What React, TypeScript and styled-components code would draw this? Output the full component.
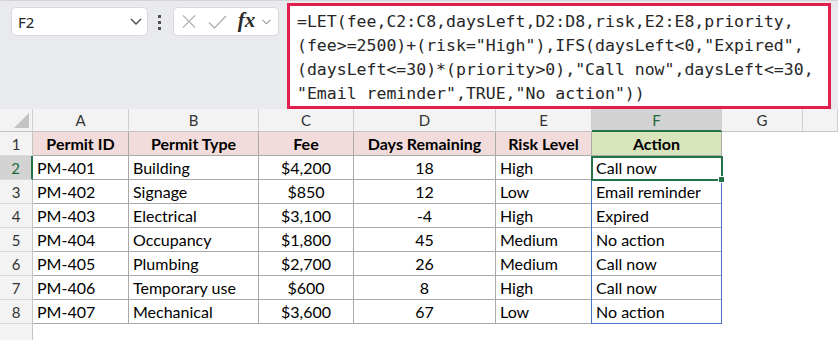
import React from "react";
import styled, { createGlobalStyle } from "styled-components";

const GlobalStyle = createGlobalStyle`
  html, body {
    margin: 0;
    padding: 0;
    background: #e9eaee;
  }
  body {
    font-family: "Lato", "Liberation Sans", sans-serif;
  }
`;

const Page = styled.div`
  width: 838px;
  height: 340px;
  overflow: hidden;
  background: #e9eaee;
  display: flex;
  flex-direction: column;
`;

const TopStrip = styled.div`
  height: 3px;
  background: #f3f3f5;
  border-bottom: 1px solid #d4d4d8;
`;

const Toolbar = styled.div`
  display: flex;
  align-items: flex-start;
  height: 116px;
  box-sizing: border-box;
  padding: 2px 0 0 11px;
`;

const NameBox = styled.div`
  margin-top: 4px;
  width: 137px;
  height: 29px;
  box-sizing: border-box;
  background: #fff;
  border: 1px solid #d9d9dd;
  border-radius: 5px;
  display: flex;
  align-items: center;
  justify-content: space-between;
  padding: 0 5px 0 6px;
  font-family: "Noto Sans", "Open Sans", sans-serif;
  font-size: 15px;
  color: #222;
`;

const Dots = styled.div`
  margin: 12px 0 0 10px;
  display: flex;
  flex-direction: column;
  gap: 3px;
  span {
    width: 3px;
    height: 3px;
    background: #505050;
  }
`;

const FxBox = styled.div`
  margin: 4px 0 0 12px;
  width: 106px;
  height: 29px;
  box-sizing: border-box;
  background: #fff;
  border: 1px solid #d9d9dd;
  border-radius: 5px;
  display: flex;
  align-items: center;
  padding: 0 0 0 8px;
`;

const IconSlot = styled.div<{ w: number }>`
  width: ${(p) => p.w}px;
  display: flex;
  align-items: center;
  justify-content: center;
`;

const FxLabel = styled.span`
  font-family: "Liberation Serif", "DejaVu Serif", serif;
  font-style: italic;
  font-weight: bold;
  font-size: 21px;
  line-height: 1;
  color: #2a2a2a;
  margin-top: -3px;
`;

const FormulaBar = styled.div`
  margin-left: 8px;
  width: 544px;
  height: 106px;
  box-sizing: border-box;
  border: 3px solid #e11f4c;
  background: #fff;
  padding: 4px 0 0 7px;
  font-family: "DejaVu Sans Mono", "Liberation Mono", monospace;
  font-size: 16.5px;
  color: #262626;
`;

const FormulaLine = styled.div`
  height: 24px;
  line-height: 24px;
  white-space: pre;
`;

const Sheet = styled.div`
  flex: 1;
  background: #fff;
  display: grid;
  grid-template-columns: 33px 96px 130px 95px 142px 96px 130px 81px 1fr;
  grid-template-rows: 23px repeat(9, 24px);
`;

type Pos = { $r: number; $c: number };

const ColHead = styled.div<Pos & { $active?: boolean }>`
  grid-row: ${(p) => p.$r};
  grid-column: ${(p) => p.$c};
  background: ${(p) => (p.$active ? "#d3d3d3" : "#f3f3f3")};
  border-right: 1px solid #cfcfcf;
  border-bottom: ${(p) => (p.$active ? "2px solid #217346" : "1px solid #c4c4c4")};
  box-sizing: border-box;
  display: flex;
  align-items: center;
  justify-content: center;
  font-size: 15px;
  color: ${(p) => (p.$active ? "#1d6b3d" : "#333")};
`;

const Corner = styled(ColHead)`
  align-items: flex-end;
  justify-content: flex-end;
  padding: 0 3px 3px 0;
`;

const RowHead = styled.div<Pos & { $active?: boolean }>`
  grid-row: ${(p) => p.$r};
  grid-column: ${(p) => p.$c};
  background: ${(p) => (p.$active ? "#d3d3d3" : "#f3f3f3")};
  border-right: ${(p) => (p.$active ? "2px solid #217346" : "1px solid #c4c4c4")};
  border-bottom: 1px solid #dcdcdc;
  box-sizing: border-box;
  display: flex;
  align-items: center;
  justify-content: center;
  font-size: 15px;
  color: ${(p) => (p.$active ? "#1d6b3d" : "#333")};
`;

type Align = "left" | "center";

const Cell = styled.div<Pos & { $align?: Align; $fill?: string; $bold?: boolean }>`
  grid-row: ${(p) => p.$r};
  grid-column: ${(p) => p.$c};
  background: ${(p) => p.$fill || "#fff"};
  border-right: 1px solid #a9a9a9;
  border-bottom: 1px solid #a9a9a9;
  box-sizing: border-box;
  display: flex;
  align-items: center;
  justify-content: ${(p) => (p.$align === "center" ? "center" : "flex-start")};
  padding: 0 4px;
  font-size: 16px;
  font-weight: ${(p) => (p.$bold ? 700 : 400)};
  color: #000;
  white-space: nowrap;
  overflow: hidden;
`;

const SpillRange = styled.div`
  grid-column: 7;
  grid-row: 3 / 10;
  margin-left: -1px;
  border: 1px solid #4a74c9;
  pointer-events: none;
`;

const Selection = styled.div`
  grid-column: 7;
  grid-row: 3;
  margin: 0 -1px -1px -1px;
  border: 2px solid #217346;
  position: relative;
  pointer-events: none;
`;

const FillHandle = styled.span`
  position: absolute;
  right: -4px;
  bottom: -4px;
  width: 5px;
  height: 5px;
  background: #217346;
  border: 1px solid #fff;
`;

const cols = ["A", "B", "C", "D", "E", "F", "G", ""];

const headers = ["Permit ID", "Permit Type", "Fee", "Days Remaining", "Risk Level", "Action"];

const rows = [
  ["PM-401", "Building", "$4,200", "18", "High", "Call now"],
  ["PM-402", "Signage", "$850", "12", "Low", "Email reminder"],
  ["PM-403", "Electrical", "$3,100", "-4", "High", "Expired"],
  ["PM-404", "Occupancy", "$1,800", "45", "Medium", "No action"],
  ["PM-405", "Plumbing", "$2,700", "26", "Medium", "Call now"],
  ["PM-406", "Temporary use", "$600", "8", "High", "Call now"],
  ["PM-407", "Mechanical", "$3,600", "67", "Low", "No action"],
];

const aligns: Align[] = ["left", "left", "center", "center", "left", "left"];

const formula = [
  "=LET(fee,C2:C8,daysLeft,D2:D8,risk,E2:E8,priority,",
  "(fee>=2500)+(risk=\"High\"),IFS(daysLeft<0,\"Expired\",",
  "(daysLeft<=30)*(priority>0),\"Call now\",daysLeft<=30,",
  "\"Email reminder\",TRUE,\"No action\"))",
];

const Chevron = () => (
  <svg width="12" height="7" viewBox="0 0 12 7" fill="none">
    <path d="M1 1l5 5 5-5" stroke="#444" strokeWidth="1.3" />
  </svg>
);

export default function App() {
  return (
    <Page>
      <GlobalStyle />
      <TopStrip />
      <Toolbar>
        <NameBox>
          <span>F2</span>
          <Chevron />
        </NameBox>
        <Dots>
          <span />
          <span />
          <span />
        </Dots>
        <FxBox>
          <IconSlot w={14}>
            <svg width="15" height="15" viewBox="0 0 15 15">
              <path d="M1 1l13 13M14 1L1 14" stroke="#a8a8a8" strokeWidth="1.2" />
            </svg>
          </IconSlot>
          <IconSlot w={44}>
            <svg width="19" height="14" viewBox="0 0 19 14" fill="none">
              <path d="M1 7.5l5.5 5.5L18 1" stroke="#a8a8a8" strokeWidth="1.2" />
            </svg>
          </IconSlot>
          <IconSlot w={17}>
            <FxLabel>fx</FxLabel>
          </IconSlot>
          <IconSlot w={24}>
            <svg width="9" height="6" viewBox="0 0 9 6" fill="none">
              <path d="M0.5 0.8l4 4 4-4" stroke="#999" strokeWidth="1.1" />
            </svg>
          </IconSlot>
        </FxBox>
        <FormulaBar>
          {formula.map((l) => (
            <FormulaLine key={l}>{l}</FormulaLine>
          ))}
        </FormulaBar>
      </Toolbar>
      <Sheet>
        <Corner $r={1} $c={1}>
          <svg width="15" height="15" viewBox="0 0 15 15">
            <path d="M15 0V15H0Z" fill="#c3c3c3" />
          </svg>
        </Corner>
        {cols.map((c, i) => (
          <ColHead key={i} $r={1} $c={i + 2} $active={c === "F"}>
            {c}
          </ColHead>
        ))}

        <RowHead $r={2} $c={1}>
          1
        </RowHead>
        {headers.map((h, i) => (
          <Cell
            key={h}
            $r={2}
            $c={i + 2}
            $align="center"
            $bold
            $fill={i === 5 ? "#d8e4bc" : "#f2dcdb"}
          >
            {h}
          </Cell>
        ))}

        {rows.map((r, ri) => (
          <React.Fragment key={ri}>
            <RowHead $r={ri + 3} $c={1} $active={ri === 0}>
              {ri + 2}
            </RowHead>
            {r.map((v, ci) => (
              <Cell key={ci} $r={ri + 3} $c={ci + 2} $align={aligns[ci]}>
                {v}
              </Cell>
            ))}
          </React.Fragment>
        ))}

        <RowHead $r={10} $c={1} />

        <SpillRange />
        <Selection>
          <FillHandle />
        </Selection>
      </Sheet>
    </Page>
  );
}
